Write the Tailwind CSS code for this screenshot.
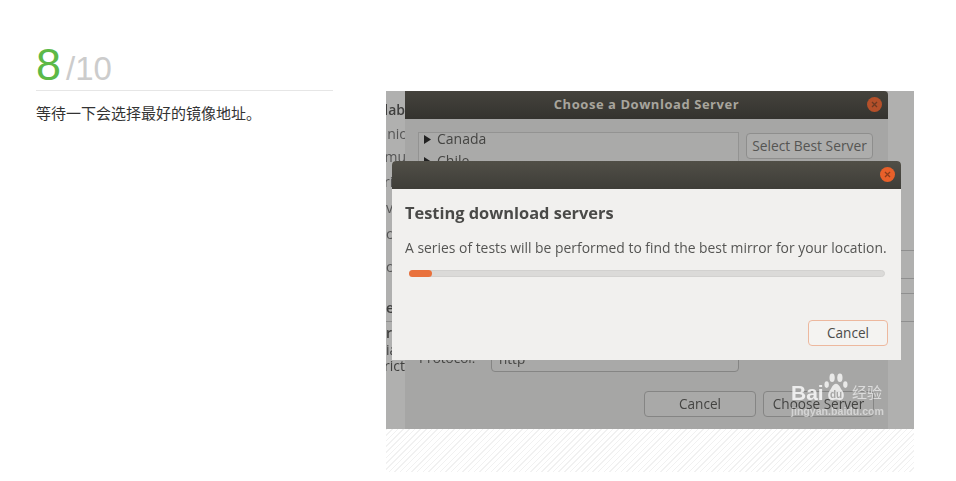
<!DOCTYPE html>
<html><head><meta charset="utf-8"><script src="https://cdn.jsdelivr.net/npm/@tailwindcss/browser@4"></script></head>
<body class="bg-white">
<div class="w-[956px] h-[481px] overflow-hidden flex items-start font-['Liberation_Sans','Noto_Sans_CJK_SC',sans-serif]">
  <div class="w-[297px] ml-[36px] mt-[40px]">
    <div class="h-[51px] border-b border-[#e6e6e6] flex items-baseline leading-[50px]">
      <span class="text-[45px] text-[#5cb947]">8</span>
      <span class="text-[33px] text-[#cccccc] ml-[5px]">/10</span>
    </div>
    <p class="mt-[12px] text-[15px] leading-[22px] text-[#333333]">等待一下会选择最好的镜像地址。</p>
  </div>
  <div class="ml-[53px] mt-[91px] w-[528px]">
    <div class="relative w-[528px] h-[338px] overflow-hidden bg-[#b0b0af] font-['Open_Sans','Noto_Sans',sans-serif] text-[#4c4c4a]">
      <div class="absolute inset-0 blur-[0.7px]">
        <div class="absolute left-0 top-0 w-[20px] h-[338px] text-[14px] leading-[18px] text-[#3f3f3e] overflow-hidden">
          <span class="absolute top-[10px] right-[1px] font-semibold">lab</span>
          <span class="absolute top-[34px] right-[0px] text-[#555]">nic</span>
          <span class="absolute top-[57px] right-[0px] text-[#555]">mu</span>
          <span class="absolute top-[82px] left-[-2px] text-[#555]">ri</span>
          <span class="absolute top-[108px] left-0 text-[#555]">v</span>
          <span class="absolute top-[134px] left-0 text-[#555]">c</span>
          <span class="absolute top-[167px] left-0 text-[#555]">c</span>
          <span class="absolute top-[208px] left-0 font-semibold">e</span>
          <span class="absolute top-[233px] left-0 font-semibold">r</span>
          <span class="absolute top-[250px] left-0">ia</span>
          <span class="absolute top-[266px] right-[1px]">rict</span>
        </div>
        <div class="absolute left-[0px] top-[230px] w-[19px] h-px bg-[#8f8f8f]"></div>

        <div class="absolute left-[19px] top-0 w-[483px] h-[338px] bg-[#a6a6a5]">
          <div class="h-[28px] rounded-tr-[4px] bg-gradient-to-b from-[#45433d] to-[#34332f] flex items-center justify-center text-[13px] font-bold text-[#a8a59d] tracking-[0.55px] relative">
            Choose a Download Server
            <span class="absolute right-[6px] top-[6px] w-[15px] h-[15px] rounded-full bg-[#b5502a] flex items-center justify-center">
              <svg width="7" height="7" viewBox="0 0 7 7"><path d="M1 1L6 6M6 1L1 6" stroke="#6e3a22" stroke-width="1.3"/></svg>
            </span>
          </div>
          <div class="absolute left-[13px] top-[41px] w-[321px] h-[40px] border border-[#939392] bg-[#aaaaa9] text-[14px] leading-[18px] text-[#444442]">
            <div class="absolute left-[5px] top-[-3px] flex items-center gap-[6px]">
              <svg width="7" height="9" viewBox="0 0 7 9"><path d="M0 0L7 4.5L0 9Z" fill="#222"/></svg>Canada
            </div>
            <div class="absolute left-[5px] top-[19px] flex items-center gap-[6px]">
              <svg width="7" height="9" viewBox="0 0 7 9"><path d="M0 0L7 4.5L0 9Z" fill="#222"/></svg>Chile
            </div>
          </div>
          <div class="absolute left-[341px] top-[42px] w-[127px] h-[26px] rounded-[4px] border border-[#8e8e8d] bg-[#adadac] flex items-center justify-center text-[13.8px] text-[#555553] whitespace-nowrap">Select Best Server</div>
          <div class="absolute left-[14px] top-[258px] text-[13.5px] leading-[18px] text-[#444442]">Protocol:</div>
          <div class="absolute left-[86px] top-[248px] w-[248px] h-[33px] rounded-[4px] border border-[#858584] bg-[#a9a9a8] pt-[10px] pl-[7px] text-[13.5px] leading-[18px] text-[#444442]">http</div>
          <div class="absolute left-[239px] top-[300px] w-[112px] h-[26px] rounded-[4px] border border-[#858584] bg-[#a9a9a8] flex items-center justify-center text-[13.6px] text-[#444442]">Cancel</div>
          <div class="absolute left-[358px] top-[300px] w-[111px] h-[26px] rounded-[4px] border border-[#858584] bg-[#a9a9a8] flex items-center justify-center text-[13.6px] text-[#444442] whitespace-nowrap">Choose Server</div>
        </div>
        <div class="absolute left-[515px] top-[159px] w-[13px] h-px bg-[#8f8f8f]"></div>
        <div class="absolute left-[515px] top-[187px] w-[13px] h-px bg-[#8f8f8f]"></div>
        <div class="absolute left-[515px] top-[202px] w-[13px] h-px bg-[#8f8f8f]"></div>
        <div class="absolute left-[515px] top-[230px] w-[13px] h-px bg-[#8f8f8f]"></div>

        <div class="absolute left-[6px] top-[70px] w-[509px] h-[199px] rounded-t-[4px] bg-[#f1f0ee]">
          <div class="h-[28px] rounded-t-[4px] bg-gradient-to-b from-[#514f47] to-[#3e3d38] relative">
            <span class="absolute right-[6px] top-[6px] w-[15px] h-[15px] rounded-full bg-[#e8602a] flex items-center justify-center">
              <svg width="7" height="7" viewBox="0 0 7 7"><path d="M1 1L6 6M6 1L1 6" stroke="#8c3d1c" stroke-width="1.3"/></svg>
            </span>
          </div>
          <div class="absolute left-[13px] top-[41px] text-[16.4px] leading-[22px] font-bold text-[#4a4a48] whitespace-nowrap">Testing download servers</div>
          <div class="absolute left-[13px] top-[77px] text-[13.9px] leading-[20px] text-[#555553] whitespace-nowrap">A series of tests will be performed to find the best mirror for your location.</div>
          <div class="absolute left-[17px] top-[109px] w-[476px] h-[7px] rounded-full bg-[#dbdad8] border border-[#d2d1cf]">
            <div class="absolute left-[-1px] top-[-1px] w-[23px] h-[7px] rounded-full bg-[#e9713c]"></div>
          </div>
          <div class="absolute left-[416px] top-[159px] w-[80px] h-[26px] rounded-[4px] border border-[#edb89e] bg-[#f4f3f1] flex items-center justify-center text-[13.6px] text-[#4c4c4a]">Cancel</div>
        </div>

        <div class="absolute left-[404px] top-[280px] w-[100px] h-[50px]">
          <svg class="absolute left-[32px] top-[2px]" width="28" height="29" viewBox="0 0 36 30" preserveAspectRatio="none" fill="#ffffff" fill-opacity="0.75">
            <ellipse cx="13" cy="5" rx="3.4" ry="4.4"/><ellipse cx="23" cy="5" rx="3.4" ry="4.4"/><ellipse cx="6" cy="12" rx="2.8" ry="3.4"/><ellipse cx="30" cy="12" rx="2.8" ry="3.4"/>
            <path d="M18 11c-4 0-5 4-8 7-3 3-3 9 2 10 2 .5 4-.5 6-.5s4 1 6 .5c5-1 5-7 2-10-3-3-4-7-8-7z"/>
          </svg>
          <span class="absolute left-[40px] top-[18px] text-[10px] leading-[12px] font-bold text-[#a6a6a5] font-['Liberation_Sans',sans-serif]">du</span>
          <span class="absolute left-[1px] top-[10px] text-[21px] leading-[24px] font-bold font-['Liberation_Sans',sans-serif] text-white/80">Bai</span>
          <span class="absolute left-[62px] top-[12px] text-[15px] leading-[18px] text-white/60 font-['Noto_Sans_CJK_SC',sans-serif]">经验</span>
          <span class="absolute left-[1px] top-[34px] text-[10.6px] leading-[13px] font-bold text-white/50 font-['Liberation_Sans',sans-serif] whitespace-nowrap">jingyan.baidu.com</span>
        </div>
      </div>
    </div>
    <div class="h-[43px] bg-[repeating-linear-gradient(135deg,#f1f1f1_0px,#f1f1f1_1px,#ffffff_1px,#ffffff_4px)]"></div>
  </div>
</div>
</body></html>
